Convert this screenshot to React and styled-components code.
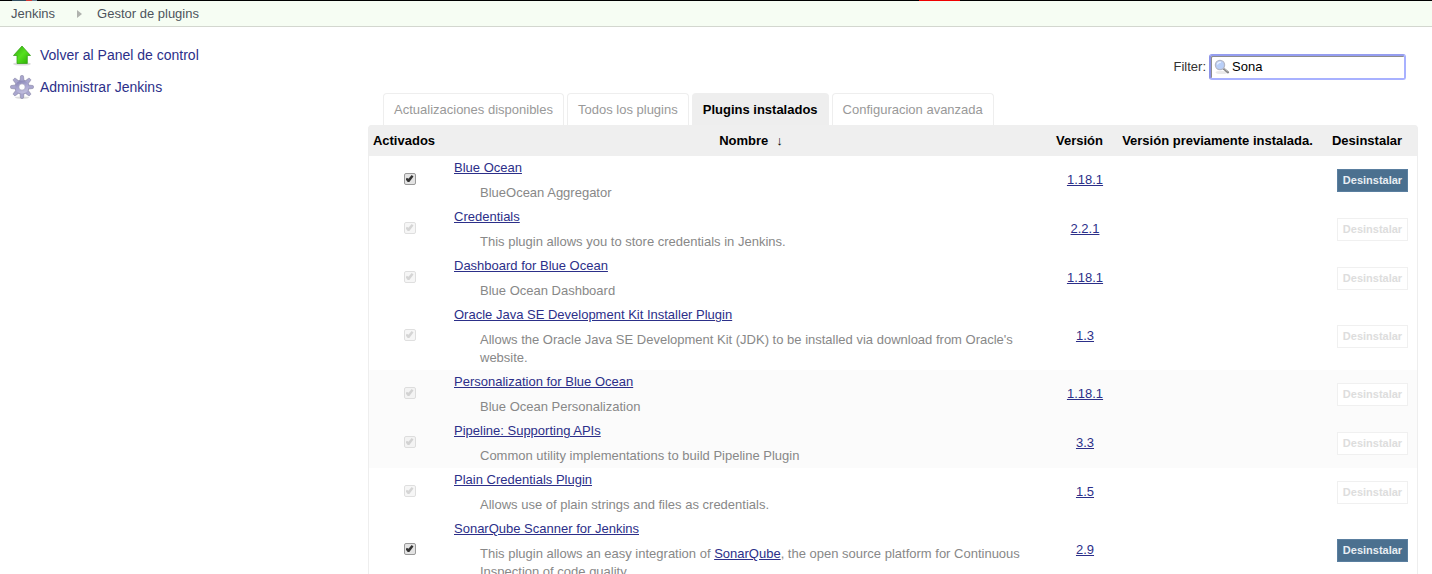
import React, { useState } from 'react';
import styled, { createGlobalStyle } from 'styled-components';

const GlobalStyle = createGlobalStyle`
  * { box-sizing: border-box; }
  html { scrollbar-width: none; }
  body {
    margin: 0;
    background: #fff;
    color: #333;
    font: 13px/18px "Liberation Sans", Arial, sans-serif;
  }
`;

const TopStrip = styled.header`
  display: flex;
  justify-content: space-between;
  height: 1px;
  padding: 0 472px 0 12px;
  background: #000;
`;

const LogoEdge = styled.span`
  width: 25px;
  background: linear-gradient(90deg, #335061 0 14px, #d33833 14px 20px, #6d8494 20px);
`;

const Alert = styled.span`
  width: 41px;
  background: #ef0000;
`;

const Breadcrumbs = styled.nav`
  display: flex;
  align-items: center;
  height: 26px;
  padding: 0 11px;
  background: #f6fdf3;
  border-bottom: 1px solid #d3d7cf;
`;

const Crumb = styled.a`
  color: #4d545d;
  text-decoration: none;
`;

const CrumbArrow = styled.svg`
  width: 5px;
  height: 8px;
  margin: 1px 15px 0 22px;
`;

const Page = styled.div`
  display: flex;
  align-items: flex-start;
`;

const SidePanel = styled.aside`
  flex: 0 0 368px;
  display: flex;
  flex-direction: column;
  gap: 8px;
  padding: 16px 10px;
`;

const Task = styled.a`
  display: flex;
  align-items: center;
  gap: 6px;
  height: 24px;
  color: #2c2f89;
  font-size: 14px;
  text-decoration: none;
`;

const TaskIcon = styled.svg`
  width: 24px;
  height: 24px;
`;

const Main = styled.main`
  flex: 1;
  min-width: 0;
  padding: 27px 14px 0 0;
`;

const FilterRow = styled.form`
  display: flex;
  justify-content: flex-end;
  align-items: center;
  gap: 3px;
  padding-right: 12px;
`;

const SearchBox = styled.span`
  display: flex;
  align-items: center;
  gap: 2px;
  width: 197px;
  height: 26px;
  padding: 0 3px;
  background: #fff;
  border: 2px solid #a8b1ff;
  border-top-color: #959df0;
  border-left-color: #8b92e8;
  border-radius: 3px;
  box-shadow: inset 1px 1px 0 #8d8d8d;
`;

const SearchIcon = styled.svg`
  flex: none;
  width: 16px;
  height: 16px;
`;

const SearchInput = styled.input`
  flex: 1;
  min-width: 0;
  padding: 0;
  border: 0;
  outline: 0;
  background: none;
  color: #000;
  font: inherit;
`;

const Tabs = styled.nav`
  display: flex;
  gap: 3px;
  margin-top: 13px;
  padding-left: 15px;
`;

const Tab = styled.a`
  height: 32px;
  padding: 7px 10px;
  border: 1px solid #eee;
  border-bottom: 0;
  border-radius: 4px 4px 0 0;
  background: ${(p) => (p.$active ? '#eee' : '#fff')};
  color: ${(p) => (p.$active ? '#000' : '#999')};
  font-weight: ${(p) => (p.$active ? 700 : 400)};
  text-decoration: none;
  white-space: nowrap;
`;

const PluginPane = styled.section`
  border: solid #eee;
  border-width: 0 1px;
  border-radius: 4px 4px 0 0;
  overflow: hidden;
  background: #efefef;
`;

const PluginTable = styled.table`
  width: 100%;
  table-layout: fixed;
  border-collapse: collapse;
`;

const Column = styled.col`
  width: ${(p) => p.$width};
`;

const HeadCell = styled.th`
  height: 31px;
  padding: 0 0 0 ${(p) => (p.$wide ? '22px' : '0')};
  background: #efefef;
  color: #000;
  text-align: center;
  white-space: nowrap;
`;

const SortArrow = styled.span`
  margin-left: 8px;
  font-weight: 400;
`;

const Row = styled.tr`
  background: ${(p) => (p.$shaded ? '#fbfbfb' : '#fff')};
`;

const Cell = styled.td`
  padding: 3px 3px 3px 14px;
  text-align: center;
  vertical-align: middle;
`;

const NameCell = styled(Cell)`
  padding-left: 15px;
  text-align: left;
`;

const VersionCell = styled(Cell)`
  padding-bottom: 5px;
`;

const Link = styled.a`
  color: #2c2f89;
  text-decoration: underline;
`;

const Description = styled.div`
  margin: 7px 10px 0 26px;
  color: #888;
`;

const Tick = styled.input`
  appearance: none;
  display: block;
  width: 12px;
  height: 12px;
  margin: 0 auto 3px;
  border: 1px solid #999;
  border-radius: 2px;
  background: #e3e3e3;
  opacity: ${(p) => (p.disabled ? 0.3 : 1)};
  position: relative;

  &:checked::after {
    content: "";
    position: absolute;
    inset: 1px 1px 2px;
    background: ${(p) => (p.disabled ? '#777' : '#333')};
    clip-path: polygon(0 60%, 18% 38%, 36% 54%, 78% 0, 100% 22%, 48% 100%, 28% 100%);
  }
`;

const UninstallButton = styled.button`
  display: block;
  width: 71px;
  height: 23px;
  margin: 0 auto;
  padding: 0;
  border: 1px solid #5a7fa0;
  background: #4b708f;
  color: #e8eef3;
  font: bold 11px/21px "Liberation Sans", Arial, sans-serif;

  &:disabled {
    border-color: #f0f0f0;
    background: #fff;
    color: #ddd;
  }
`;

const plugins = [
  { name: 'Blue Ocean', text: 'BlueOcean Aggregator', version: '1.18.1', removable: true },
  { name: 'Credentials', text: 'This plugin allows you to store credentials in Jenkins.', version: '2.2.1' },
  { name: 'Dashboard for Blue Ocean', text: 'Blue Ocean Dashboard', version: '1.18.1' },
  {
    name: 'Oracle Java SE Development Kit Installer Plugin',
    text: "Allows the Oracle Java SE Development Kit (JDK) to be installed via download from Oracle's website.",
    version: '1.3',
  },
  { name: 'Personalization for Blue Ocean', text: 'Blue Ocean Personalization', version: '1.18.1', shaded: true },
  { name: 'Pipeline: Supporting APIs', text: 'Common utility implementations to build Pipeline Plugin', version: '3.3', shaded: true },
  { name: 'Plain Credentials Plugin', text: 'Allows use of plain strings and files as credentials.', version: '1.5' },
  {
    name: 'SonarQube Scanner for Jenkins',
    text: (
      <>
        This plugin allows an easy integration of <Link href="#sonarqube">SonarQube</Link>, the open source
        platform for Continuous Inspection of code quality.
      </>
    ),
    version: '2.9',
    removable: true,
  },
];

const tabs = ['Actualizaciones disponibles', 'Todos los plugins', 'Plugins instalados', 'Configuracion avanzada'];

function UpIcon() {
  return (
    <TaskIcon viewBox="0 0 24 24" aria-hidden="true">
      <defs>
        <linearGradient id="up" x1="0" y1="0" x2="1" y2="1">
          <stop offset="0" stopColor="#2fa80c" />
          <stop offset="0.5" stopColor="#55e01e" />
          <stop offset="1" stopColor="#27a900" />
        </linearGradient>
      </defs>
      <ellipse cx="12" cy="21" rx="9" ry="1.6" fill="#dcdcdc" />
      <path d="M12 3 20.5 12.5H17.3V20.5H7V12.5H3.5Z" fill="url(#up)" stroke="#3aa31c" strokeWidth="0.8" />
    </TaskIcon>
  );
}

function GearIcon() {
  const teeth = [0, 45, 90, 135, 180, 225, 270, 315];
  return (
    <TaskIcon viewBox="0 0 24 24" aria-hidden="true">
      <defs>
        <linearGradient id="gear" gradientUnits="userSpaceOnUse" x1="8" y1="3" x2="15" y2="21">
          <stop offset="0" stopColor="#7c79a8" />
          <stop offset="0.5" stopColor="#aaa7d2" />
          <stop offset="1" stopColor="#cbc9e2" />
        </linearGradient>
      </defs>
      <ellipse cx="12" cy="22.6" rx="7" ry="1.1" fill="#dedede" />
      <circle cx="12" cy="12" r="6.9" fill="#aaa8c8" stroke="#8583a3" strokeWidth="0.8" />
      {teeth.map((angle) => (
        <path
          key={angle}
          d="M9.9 6.4 10.5 1.4Q10.6.6 11.2.6H12.8Q13.4.6 13.5 1.4L14.1 6.4"
          fill="#a9a6ce"
          stroke="#8583a3"
          strokeWidth="0.6"
          transform={`rotate(${angle} 12 12)`}
        />
      ))}
      <circle cx="12" cy="12" r="6.6" fill="url(#gear)" />
      <circle cx="12" cy="12" r="3.2" fill="#fff" stroke="#918eae" strokeWidth="0.6" />
    </TaskIcon>
  );
}

function Magnifier() {
  return (
    <SearchIcon viewBox="0 0 16 16" aria-hidden="true">
      <ellipse cx="7.5" cy="13.5" rx="6" ry="1.6" fill="#e9e9e9" />
      <path d="M9.5 9.5 14 13.3" stroke="#858585" strokeWidth="2.2" strokeLinecap="round" />
      <path d="M10 9.3 13.6 12.4" stroke="#c4c4c4" strokeWidth="0.8" />
      <circle cx="6" cy="6" r="4.6" fill="#b9cff8" stroke="#b4b7c6" strokeWidth="1.3" />
      <path d="M3.4 5.5A2.8 2.8 0 0 1 7 3.3" fill="none" stroke="#e9f1ff" strokeWidth="1.3" />
    </SearchIcon>
  );
}

function PluginRow({ plugin }) {
  const [enabled, setEnabled] = useState(true);
  return (
    <Row $shaded={plugin.shaded}>
      <Cell>
        <Tick
          type="checkbox"
          aria-label={plugin.name}
          checked={enabled}
          disabled={!plugin.removable}
          onChange={(e) => setEnabled(e.target.checked)}
        />
      </Cell>
      <NameCell>
        <Link href="#plugin">{plugin.name}</Link>
        <Description>{plugin.text}</Description>
      </NameCell>
      <VersionCell>
        <Link href="#version">{plugin.version}</Link>
      </VersionCell>
      <Cell />
      <Cell>
        <UninstallButton type="button" disabled={!plugin.removable}>Desinstalar</UninstallButton>
      </Cell>
    </Row>
  );
}

export default function App() {
  const [filter, setFilter] = useState('Sona');
  return (
    <>
      <GlobalStyle />
      <TopStrip>
        <LogoEdge />
        <Alert />
      </TopStrip>
      <Breadcrumbs>
        <Crumb href="#jenkins">Jenkins</Crumb>
        <CrumbArrow viewBox="0 0 5 8" aria-hidden="true">
          <path d="M0 0 5 4 0 8Z" fill="#b0b3ae" />
        </CrumbArrow>
        <Crumb href="#plugins">Gestor de plugins</Crumb>
      </Breadcrumbs>
      <Page>
        <SidePanel>
          <Task href="#panel"><UpIcon />Volver al Panel de control</Task>
          <Task href="#manage"><GearIcon />Administrar Jenkins</Task>
        </SidePanel>
        <Main>
          <FilterRow>
            <label htmlFor="filter">Filter:</label>
            <SearchBox>
              <Magnifier />
              <SearchInput id="filter" type="text" value={filter} onChange={(e) => setFilter(e.target.value)} />
            </SearchBox>
          </FilterRow>
          <Tabs>
            {tabs.map((tab) => (
              <Tab key={tab} href="#tab" $active={tab === 'Plugins instalados'}>{tab}</Tab>
            ))}
          </Tabs>
          <PluginPane>
            <PluginTable>
              <colgroup>
                <Column $width="70px" />
                <Column />
                <Column $width="77px" />
                <Column $width="199px" />
                <Column $width="100px" />
              </colgroup>
              <thead>
                <tr>
                  <HeadCell>Activados</HeadCell>
                  <HeadCell $wide>Nombre<SortArrow>↓</SortArrow></HeadCell>
                  <HeadCell>Versión</HeadCell>
                  <HeadCell>Versión previamente instalada.</HeadCell>
                  <HeadCell>Desinstalar</HeadCell>
                </tr>
              </thead>
              <tbody>
                {plugins.map((plugin) => <PluginRow key={plugin.name} plugin={plugin} />)}
              </tbody>
            </PluginTable>
          </PluginPane>
        </Main>
      </Page>
    </>
  );
}
